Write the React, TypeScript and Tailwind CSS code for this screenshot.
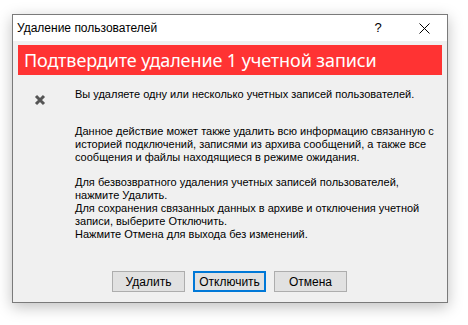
import React from 'react';

const DeleteUsersDialog: React.FC = () => {
  return (
    <div className="w-[468px] h-[325px] bg-white pt-[14px] pl-[12px]">
      <div className="w-[436px] h-[289px] border border-[#7a7a7a] bg-[#f0f0f0] shadow-[0_4px_14px_rgba(0,0,0,0.25)] flex flex-col font-['Liberation_Sans',sans-serif] text-black">
        {/* title bar */}
        <div className="h-[26px] bg-white flex items-center shrink-0">
          <span className="pl-[4px] text-[12px] flex-1">Удаление пользователей</span>
          <span className="w-[46px] text-center text-[13px]">?</span>
          <span className="w-[46px] flex justify-center">
            <svg width="11" height="11" viewBox="0 0 11 11">
              <path d="M0.5 0.5 L10.5 10.5 M10.5 0.5 L0.5 10.5" stroke="#000" strokeWidth="1" />
            </svg>
          </span>
        </div>

        <div className="mx-[5px] mt-[4px] h-[30px] bg-[#ff3333] flex items-center pl-[6px]">
          <span className="text-white text-[18px] font-['Noto_Sans',sans-serif] tracking-[-0.1px]">Подтвердите удаление 1 учетной записи</span>
        </div>

        <div className="flex pt-[13px]">
          <div className="w-[62px] pl-[21px] pt-[6px]">
            <svg width="12" height="12" viewBox="0 0 12 12">
              <path d="M2 2 L10 10 M10 2 L2 10" stroke="#555" strokeWidth="3" />
            </svg>
          </div>
          <div className="flex-1 text-[11px] leading-[13px] whitespace-nowrap">
            <p>Вы удаляете одну или несколько учетных записей пользователей.</p>
            <p className="mt-[24px]">
              Данное действие может также удалить всю информацию связанную с
              <br />
              историей подключений, записями из архива сообщений, а также все
              <br />
              сообщения и файлы находящиеся в режиме ожидания.
            </p>
            <p className="mt-[12px]">
              Для безвозвратного удаления учетных записей пользователей,
              <br />
              нажмите Удалить.
              <br />
              Для сохранения связанных данных в архиве и отключения учетной
              <br />
              записи, выберите Отключить.
              <br />
              Нажмите Отмена для выхода без изменений.
            </p>
          </div>
        </div>

        <div className="flex-1" />
        <div className="flex gap-[8px] pl-[99px] pb-[10px] text-[12px]">
          <button className="w-[73px] h-[21px] border border-[#adadad] bg-[#e1e1e1]">Удалить</button>
          <button className="w-[73px] h-[21px] border-2 border-[#0078d7] bg-[#e1e1e1]">Отключить</button>
          <button className="w-[73px] h-[21px] border border-[#adadad] bg-[#e1e1e1]">Отмена</button>
        </div>
      </div>
    </div>
  );
};

export default DeleteUsersDialog;
